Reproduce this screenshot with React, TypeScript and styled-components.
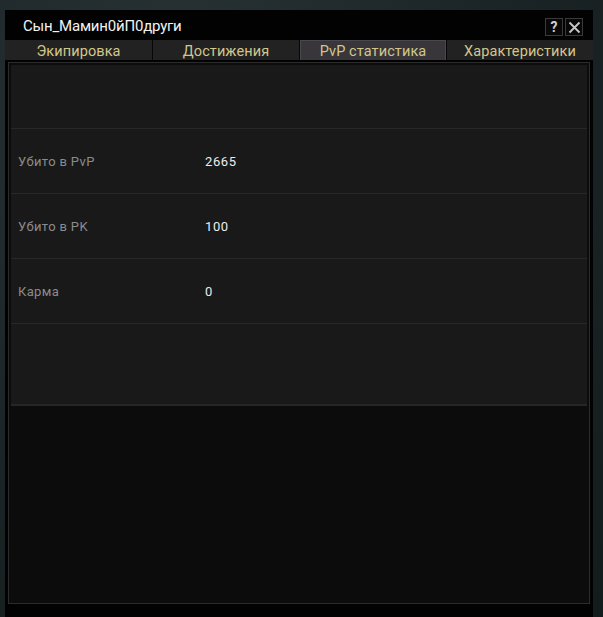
import { createGlobalStyle, styled } from 'styled-components';

const GlobalStyle = createGlobalStyle`
  html, body {
    margin: 0;
    padding: 0;
    height: 100%;
  }
  body {
    background: radial-gradient(ellipse at 30% 20%, #2a3538 0%, #1b2426 55%, #141b1d 100%);
    font-family: Roboto, 'Noto Sans', sans-serif;
    overflow: hidden;
  }
`;

const stats = [
  { label: 'Убито в PvP', value: '2665' },
  { label: 'Убито в PK', value: '100' },
  { label: 'Карма', value: '0' },
];

const tabs = ['Экипировка', 'Достижения', 'PvP статистика', 'Характеристики'];

export default function App(): JSX.Element {
  return (
    <>
      <GlobalStyle />
      <Page>
        <Window>
          <TitleBar>
            <Title>Сын_Мамин0йП0други</Title>
            <TitleButtons>
              <TitleButton aria-label={'help'}>?</TitleButton>
              <TitleButton aria-label={'close'}>
                <svg width={13} height={13} viewBox={'0 0 13 13'}>
                  <path d={'M1.5 1.5 L11.5 11.5 M11.5 1.5 L1.5 11.5'} stroke={'#c8c8c8'} strokeWidth={1.8} />
                </svg>
              </TitleButton>
            </TitleButtons>
          </TitleBar>
          <Tabs>
            {tabs.map((tab, i) => (
              <Tab key={tab} $active={i === 2}>
                {tab}
              </Tab>
            ))}
          </Tabs>
          <Frame>
            <Table>
              <Row $empty />
              {stats.map((s) => (
                <Row key={s.label}>
                  <Label>{s.label}</Label>
                  <Value>{s.value}</Value>
                </Row>
              ))}
              <Row $tall />
            </Table>
          </Frame>
        </Window>
      </Page>
    </>
  );
}

const Page = styled.div`
  width: 603px;
  height: 617px;
  padding: 10px 10px 0 5px;
  box-sizing: border-box;
`;

const Window = styled.div`
  width: 588px;
  height: 607px;
  background: #020202;
  display: flex;
  flex-direction: column;
`;

const TitleBar = styled.div`
  height: 30px;
  display: flex;
  align-items: center;
  justify-content: space-between;
  padding: 0 10px 0 18px;
`;

const Title = styled.div`
  color: #f2f2f2;
  font-size: 15px;
  letter-spacing: -0.2px;
  padding-top: 2px;
`;

const TitleButtons = styled.div`
  display: flex;
  gap: 2px;
  margin-top: 4px;
`;

const TitleButton = styled.div`
  width: 16px;
  height: 16px;
  border: 1px solid #3a3a3a;
  background: #080808;
  color: #cfcfcf;
  font-size: 14px;
  font-weight: bold;
  display: flex;
  align-items: center;
  justify-content: center;
`;

const Tabs = styled.div`
  display: grid;
  grid-template-columns: 147px 146px 146px 1fr;
  gap: 1px;
  height: 20px;
  background: #060606;
`;

const Tab = styled.div<{ $active?: boolean }>`
  background: ${(p) => (p.$active ? '#38363b' : '#222222')};
  border: 1px solid ${(p) => (p.$active ? '#4a484d' : '#222222')};
  border-bottom: none;
  color: #d3c68a;
  font-size: 14.5px;
  letter-spacing: 0.1px;
  display: flex;
  align-items: center;
  justify-content: center;
  box-sizing: border-box;
  padding-top: 1px;
`;

const Frame = styled.div`
  flex: 1;
  margin: 2px 3px 13px 3px;
  border: 1px solid #2c2c2c;
  background: #0c0c0c;
  padding: 2px;
`;

const Table = styled.div`
  background: #191919;
  border-bottom: 2px solid #262626;
  display: flex;
  flex-direction: column;
`;

const Row = styled.div<{ $empty?: boolean; $tall?: boolean }>`
  height: ${(p) => (p.$tall ? '80px' : p.$empty ? '63px' : '64px')};
  border-top: ${(p) => (p.$empty ? 'none' : '1px solid #272727')};
  display: flex;
  align-items: center;
  padding-left: 7px;
`;

const Label = styled.div`
  width: 187px;
  color: #8b8b8b;
  font-size: 13px;
  letter-spacing: 0.35px;
`;

const Value = styled.div`
  color: #ececec;
  font-size: 13px;
  letter-spacing: 0.6px;
`;
